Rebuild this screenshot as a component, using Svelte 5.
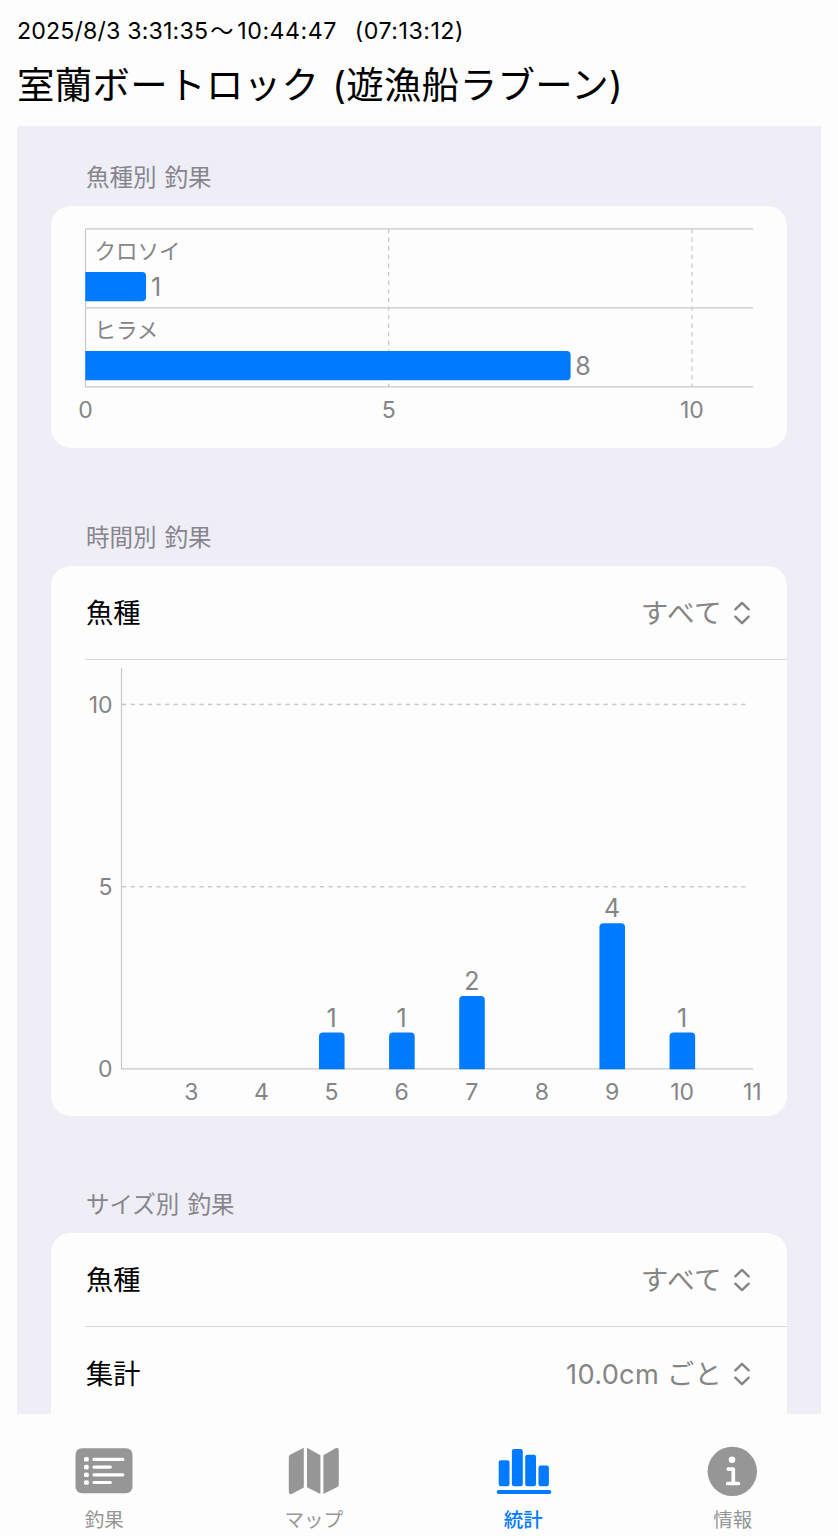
<script>
  const species = [
    { name: 'クロソイ', count: 1, labelGap: 10 },
    { name: 'ヒラメ', count: 8, labelGap: 12.5 }
  ];
  const hours = [3, 4, 5, 6, 7, 8, 9, 10, 11];
  const catches = [
    { hour: 5, count: 1 },
    { hour: 6, count: 1 },
    { hour: 7, count: 2 },
    { hour: 9, count: 4 },
    { hour: 10, count: 1 }
  ];
  const speciesX = (v) => 34.4 + v * 60.65;
  const hourX = (h) => 70.2 + (h - 2) * 70.12;
  const countY = (v) => 409 - v * 36.45;
</script>

{#snippet picker(label, value)}
  <div class="row">
    <span class="row-label">{label}</span>
    <span class="row-value" class:kana={value === 'すべて'}>{value}</span>
    <svg class="chevrons" width="18" height="24" viewBox="0 0 18 24">
      <path d="M2.3 8.3 9 1.9l6.7 6.4M2.3 15.7 9 22.1l6.7-6.4" />
    </svg>
  </div>
{/snippet}

<div class="screen">
  <header>
    <div class="time"><span class="start">2025/8/3 3:31:35</span><span class="wave">〜</span><span class="end">10:44:47</span><span class="span">(07:13:12)</span></div>
    <h1>室蘭ボートロック (遊漁船ラブーン)</h1>
  </header>

  <main>
    <section>
      <h2>魚種別 釣果</h2>
      <div class="card">
        <svg class="chart" width="736" height="242" viewBox="0 0 736 242">
          {#each [5, 10] as v}
            <line class="dash" x1={speciesX(v)} x2={speciesX(v)} y1="23" y2="181" />
          {/each}
          {#each [0, 1, 2] as i}
            <line class="axis" x1="34" x2="702" y1={22.8 + i * 79} y2={22.8 + i * 79} />
          {/each}
          <line class="axis" x1="34.5" x2="34.5" y1="23" y2="181" />
          {#each species as s, i}
            <text class="name" x="43.5" y={52.5 + i * 79}>{s.name}</text>
            <path class="bar" d="M34.3 {66 + i * 79}H{speciesX(s.count) - 4}q4 0 4 4v21.2q0 4-4 4H34.3z" />
            <text class="value" x={speciesX(s.count) + s.labelGap} y={90 + i * 79}>{s.count}</text>
          {/each}
          {#each [0, 5, 10] as v}
            <text class="tick" x={speciesX(v)} y="211.5">{v}</text>
          {/each}
        </svg>
      </div>
    </section>

    <section>
      <h2>時間別 釣果</h2>
      <div class="card">
        {@render picker('魚種', 'すべて')}
        <div class="divider"></div>
        <svg class="chart" width="736" height="456" viewBox="0 0 736 456">
          {#each [5, 10] as v}
            <line class="dash" x1="71" x2="698.5" y1={countY(v)} y2={countY(v)} />
          {/each}
          <line class="axis" x1="70.5" x2="70.5" y1="8" y2="409.5" />
          <line class="axis" x1="70" x2="702" y1="408.8" y2="408.8" />
          {#each [0, 5, 10] as v}
            <text class="tick side" x="61.5" y={countY(v) + 8}>{v}</text>
          {/each}
          {#each hours as h}
            <text class="tick" x={hourX(h)} y="440">{h}</text>
          {/each}
          {#each catches as c}
            <path class="bar" d="M{hourX(c.hour) - 12.6} 409.3V{countY(c.count) + 4}q0-4 4-4h17.6q4 0 4 4V409.3z" />
            <text class="value" x={hourX(c.hour)} y={countY(c.count) - 6}>{c.count}</text>
          {/each}
        </svg>
      </div>
    </section>

    <section class="last">
      <h2>サイズ別 釣果</h2>
      <div class="card open">
        {@render picker('魚種', 'すべて')}
        <div class="divider"></div>
        {@render picker('集計', '10.0cm ごと')}
      </div>
    </section>
  </main>

  <nav>
    <div class="tab">
      <svg width="60" height="54" viewBox="0 0 60 54">
        <rect x="0.5" y="5.2" width="57" height="45" rx="6.5" fill="currentColor" />
        <g fill="#fff">
          <rect x="9" y="14" width="4.8" height="4.6" rx="1.6" />
          <rect x="9" y="21.8" width="4.8" height="4.6" rx="1.6" />
          <rect x="9" y="29.4" width="4.8" height="4.6" rx="1.6" />
          <rect x="9" y="37.2" width="4.8" height="4.6" rx="1.6" />
          <rect x="17.4" y="14.8" width="32" height="3.2" rx="1.6" />
          <rect x="17.4" y="22.5" width="19.5" height="3.2" rx="1.6" />
          <rect x="17.4" y="30.2" width="32" height="3.2" rx="1.6" />
          <rect x="17.4" y="37.9" width="19.5" height="3.2" rx="1.6" />
        </g>
      </svg>
      <span>釣果</span>
    </div>
    <div class="tab">
      <svg width="60" height="54" viewBox="0 0 60 54">
        <path fill="currentColor" d="M19.8 4.8v39.7L8.2 50.8q-3.4 1.6-3.4-2V14.2q0-1.8 1.8-2.7zM23 4.8l13.4 7.5v38.8L23 44.2zM39.4 12.3l11.7-6.9q3.7-1.8 3.7 2.2v34q0 1.6-1.5 2.5l-13.9 7z" />
      </svg>
      <span>マップ</span>
    </div>
    <div class="tab active">
      <svg width="60" height="54" viewBox="0 0 60 54">
        <g fill="currentColor">
          <rect x="4.7" y="17.2" width="10.8" height="26" rx="2.2" />
          <rect x="17.9" y="6" width="10.9" height="37.2" rx="2.2" />
          <rect x="31.2" y="11.8" width="10.8" height="31.4" rx="2.2" />
          <rect x="44.5" y="22.4" width="10.4" height="20.8" rx="2.2" />
          <rect x="2.7" y="46.9" width="54.6" height="4.2" rx="2.1" />
        </g>
      </svg>
      <span>統計</span>
    </div>
    <div class="tab">
      <svg width="60" height="54" viewBox="0 0 60 54">
        <circle cx="29.3" cy="28.4" r="24.7" fill="currentColor" />
        <circle cx="29" cy="16.8" r="3.3" fill="#fff" />
        <path d="M25.3 26.1h5v14.4M24.6 40.5h10.8" fill="none" stroke="#fff" stroke-width="3.7" stroke-linecap="round" stroke-linejoin="round" />
      </svg>
      <span>情報</span>
    </div>
  </nav>
</div>

<style>
  :global(body) {
    margin: 0;
    background: #fdfdfd;
  }
  .screen {
    display: flex;
    flex-direction: column;
    width: 838px;
    height: 1536px;
    overflow: hidden;
    background: #fdfdfd;
    color: #000;
    font-family: Inter, 'Noto Sans CJK JP', sans-serif;
  }
  header {
    height: 126px;
    box-sizing: border-box;
    padding: 14px 17px 0;
    white-space: nowrap;
  }
  .time {
    display: flex;
    height: 34px;
    line-height: 35px;
    font-size: 23.2px;
  }
  .start {
    letter-spacing: 0.15px;
  }
  .wave {
    margin: 0 4px 0 2px;
  }
  .end {
    letter-spacing: 0.5px;
  }
  .span {
    margin-left: 18px;
    letter-spacing: 0.5px;
  }
  h1 {
    margin: 14px 0 0;
    height: 48px;
    line-height: 48px;
    font-size: 37.4px;
    font-weight: 400;
    letter-spacing: 0.4px;
    word-spacing: 2px;
  }
  main {
    height: 1288px;
    margin: 0 17px;
    padding: 0 34px;
    overflow: hidden;
    background: #efeef6;
  }
  section {
    padding-top: 34px;
  }
  section + section {
    padding-top: 72px;
  }
  section.last {
    padding-top: 71px;
  }
  h2 {
    margin: 0;
    padding-left: 35px;
    height: 46px;
    line-height: 36px;
    font-size: 23.5px;
    font-weight: 400;
    word-spacing: 1.5px;
    color: #86858c;
  }
  .card {
    border-radius: 20px;
    background: #fdfdfd;
    overflow: hidden;
  }
  .open {
    padding-bottom: 60px;
  }
  .row {
    display: flex;
    align-items: center;
    height: 93px;
    padding: 0 36px 0 35px;
    font-size: 27.2px;
  }
  .row-label {
    flex: 1;
    margin-bottom: 4px;
  }
  .row-value {
    color: #858585;
    margin: 0 11px 3px 0;
    letter-spacing: 0.3px;
  }
  .kana {
    font-size: 27.6px;
    letter-spacing: 0.5px;
  }
  .chevrons {
    fill: none;
    stroke: #858585;
    stroke-width: 2.4;
    stroke-linecap: round;
    stroke-linejoin: round;
  }
  .divider {
    height: 1px;
    margin-left: 34px;
    background: #d6d6d8;
  }
  .chart {
    display: block;
  }
  .axis {
    stroke: #c8c8ca;
    stroke-width: 1.2;
  }
  .dash {
    stroke: #cbcbcd;
    stroke-width: 1.3;
    stroke-dasharray: 4.3 4.3;
  }
  .bar {
    fill: #007aff;
  }
  text {
    fill: #858587;
  }
  .name {
    font-size: 21.5px;
  }
  .value {
    font-size: 25px;
    text-anchor: middle;
  }
  .tick {
    font-size: 23px;
    text-anchor: middle;
  }
  .side {
    text-anchor: end;
  }
  nav {
    display: grid;
    grid-template-columns: repeat(4, 1fr);
    height: 122px;
    box-sizing: border-box;
    padding-top: 29px;
  }
  .tab {
    display: flex;
    flex-direction: column;
    align-items: center;
    color: #969696;
  }
  .tab span {
    margin: 9px 1px 0 0;
    line-height: 28px;
    font-size: 19.5px;
    font-weight: 400;
  }
  .active {
    color: #007aff;
  }
  .active span {
    font-weight: 500;
  }
</style>
